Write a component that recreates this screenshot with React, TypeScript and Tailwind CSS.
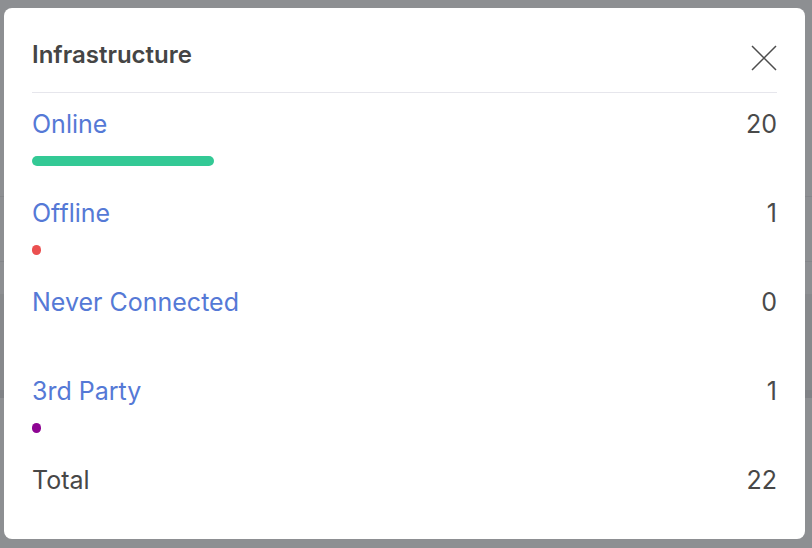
type Row = { label: string; count: number; color: string }

const ROWS: Row[] = [
  { label: 'Online', count: 20, color: 'bg-[#33c995]' },
  { label: 'Offline', count: 1, color: 'bg-[#eb5050]' },
  { label: 'Never Connected', count: 0, color: 'bg-[#9aa0a6]' },
  { label: '3rd Party', count: 1, color: 'bg-[#8e0593]' },
]

const TOTAL = ROWS.reduce((s, r) => s + r.count, 0)
const BAR_MAX = 200

function StatusRow({ row }: { row: Row }) {
  const width = Math.round((row.count / TOTAL) * BAR_MAX)
  return (
    <div className="flex flex-col pb-[31px]">
      <div className="flex h-8 items-center justify-between text-[25px] leading-8">
        <a className="text-[#5579d6] cursor-pointer">{row.label}</a>
        <span className="text-[#4a4a4a]">{row.count}</span>
      </div>
      <div className="mt-4 h-[10px]">
        {width > 0 && (
          <div className={`h-[10px] rounded-full ${row.color}`} style={{ width }} />
        )}
      </div>
    </div>
  )
}

export default function App() {
  return (
    <div className="relative h-[548px] w-[812px] overflow-hidden bg-[#8d8f92] font-['Inter',sans-serif]">
      {/* page behind the overlay */}
      <div className="flex flex-col">
        <div className="h-[196px]" />
        <div className="h-px bg-[#84868a]" />
        <div className="h-[64px]" />
        <div className="h-px bg-[#84868a]" />
        <div className="h-[32px]" />
        <div className="h-[96px] bg-[#87898c]" />
        <div className="h-[8px] bg-[#808286]" />
      </div>

      <div className="absolute left-1 top-2 flex h-[531px] w-[801px] flex-col rounded-lg bg-white px-7">
        <div className="flex items-center justify-between border-b border-[#e6e6ec] pt-[30px] pb-[21px]">
          <h2 className="text-[24px] font-semibold leading-[33px] text-[#454545]">Infrastructure</h2>
          <svg width="26" height="26" viewBox="0 0 26 26" className="mt-[6px] text-[#4d4d4d]">
            <path d="M1 1 25 25M25 1 1 25" stroke="currentColor" strokeWidth="1.5" />
          </svg>
        </div>
        <div className="flex flex-col pt-[15px]">
          {ROWS.map(r => (
            <StatusRow key={r.label} row={r} />
          ))}
          <div className="flex h-8 items-center justify-between text-[25px] leading-8 text-[#474747]">
            <span>Total</span>
            <span>{TOTAL}</span>
          </div>
        </div>
      </div>
    </div>
  )
}
